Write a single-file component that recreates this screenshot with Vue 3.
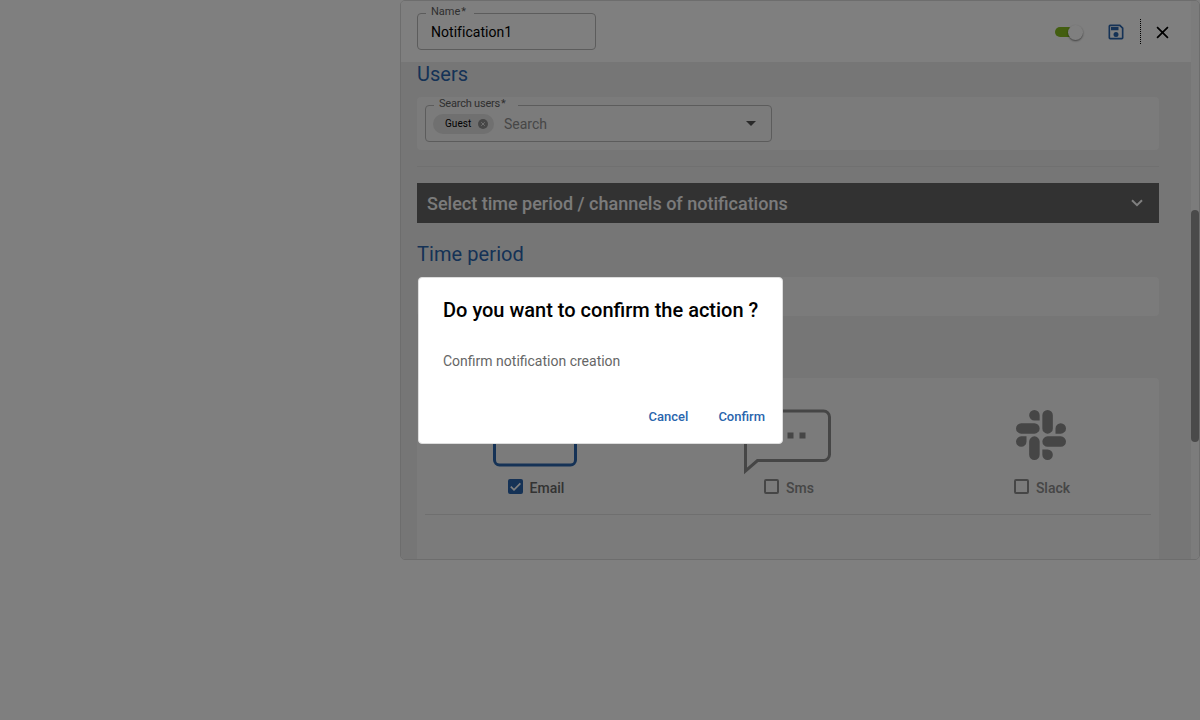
<script setup>
const channels = [
  { id: 'email', label: 'Email', checked: true },
  { id: 'sms', label: 'Sms', checked: false },
  { id: 'slack', label: 'Slack', checked: false },
]
</script>

<template>
  <div class="page">
    <section class="panel">
      <div class="main">
        <header class="header">
          <div class="field name-field">
            <span class="legend name-legend">Name<i>*</i></span>
            <span>Notification1</span>
          </div>
          <div class="tools">
            <div class="switch"><div class="knob"></div></div>
            <svg class="save" viewBox="0 0 24 24"><path d="M17 3H5a2 2 0 0 0-2 2v14a2 2 0 0 0 2 2h14a2 2 0 0 0 2-2V7zM19 19H5V5h11.2L19 7.8z"/><path d="M6 6h9v4H6zM12 12a3 3 0 1 0 0 6 3 3 0 0 0 0-6"/></svg>
            <div class="dots"></div>
            <svg class="close" viewBox="0 0 12 12"><path d="M1 1l10 10M11 1L1 11"/></svg>
          </div>
        </header>

        <div class="body">
          <h2 class="title users-title">Users</h2>
          <div class="card users-card">
            <div class="field search-field">
              <span class="legend search-legend">Search users<i>*</i></span>
              <div class="chip">
                <span>Guest</span>
                <svg viewBox="0 0 10 10"><circle cx="5" cy="5" r="5"/><path d="M3.200 3.200l3.600 3.600M6.800 3.200L3.200 6.800"/></svg>
              </div>
              <span class="placeholder">Search</span>
              <svg class="caret" viewBox="0 0 10 5"><path d="M0 0h10L5 5z"/></svg>
            </div>
          </div>
          <div class="rule"></div>
          <div class="bar">
            <span>Select time period / channels of notifications</span>
            <svg viewBox="0 0 12 8"><path d="M1 1.200l5 5 5-5"/></svg>
          </div>
          <h2 class="title period-title">Time period</h2>
          <div class="card period-card"></div>
          <div class="card channels-card">
            <div class="channels">
              <div v-for="c in channels" :key="c.id" class="channel" :class="c.id">
                <svg v-if="c.id === 'email'" class="icon-email" viewBox="0 0 84 62"><rect x="1.5" y="1.5" width="81" height="58.5" rx="5"/><path d="M4 5l38 28L80 5"/></svg>
                <svg v-else-if="c.id === 'sms'" class="icon-sms" viewBox="0 0 88 66"><path class="outline" d="M1.500 62V8a6 6 0 0 1 6-6H79.500a6 6 0 0 1 6 6v37.500a6 6 0 0 1-6 6H13.500z"/><path class="dot" d="M31.500 23.500h6v6h-6zM43.500 23.500h6v6h-6zM55.500 23.500h6v6h-6z"/></svg>
                <svg v-else class="icon-slack" viewBox="0 0 24 24"><path d="M5.042 15.165a2.528 2.528 0 0 1-2.52 2.523A2.528 2.528 0 0 1 0 15.165a2.527 2.527 0 0 1 2.522-2.52h2.52v2.52zM6.313 15.165a2.527 2.527 0 0 1 2.521-2.52 2.527 2.527 0 0 1 2.521 2.52v6.313A2.528 2.528 0 0 1 8.834 24a2.528 2.528 0 0 1-2.521-2.522v-6.313zM8.834 5.042a2.528 2.528 0 0 1-2.521-2.52A2.528 2.528 0 0 1 8.834 0a2.528 2.528 0 0 1 2.521 2.522v2.52H8.834zM8.834 6.313a2.528 2.528 0 0 1 2.521 2.521 2.528 2.528 0 0 1-2.521 2.521H2.522A2.528 2.528 0 0 1 0 8.834a2.528 2.528 0 0 1 2.522-2.521h6.312zM18.956 8.834a2.528 2.528 0 0 1 2.522-2.521A2.528 2.528 0 0 1 24 8.834a2.528 2.528 0 0 1-2.522 2.521h-2.522V8.834zM17.688 8.834a2.528 2.528 0 0 1-2.523 2.521 2.527 2.527 0 0 1-2.52-2.521V2.522A2.527 2.527 0 0 1 15.165 0a2.528 2.528 0 0 1 2.523 2.522v6.312zM15.165 18.956a2.528 2.528 0 0 1 2.523 2.522A2.528 2.528 0 0 1 15.165 24a2.527 2.527 0 0 1-2.52-2.522v-2.522h2.52zM15.165 17.688a2.527 2.527 0 0 1-2.52-2.523 2.526 2.526 0 0 1 2.52-2.52h6.313A2.527 2.527 0 0 1 24 15.165a2.528 2.528 0 0 1-2.522 2.523h-6.313z"/></svg>
                <div class="option">
                  <span class="box" :class="{ on: c.checked }"><svg v-if="c.checked" viewBox="0 0 16 16"><path d="M3 8.200l3.400 3.400 6.800-7"/></svg></span>
                  <span>{{ c.label }}</span>
                </div>
              </div>
            </div>
          </div>
        </div>
      </div>
      <div class="track"><div class="thumb"></div></div>
    </section>

    <div class="overlay">
      <div class="dialog">
        <h1>Do you want to confirm the action ?</h1>
        <p>Confirm notification creation</p>
        <div class="actions"><span>Cancel</span><span>Confirm</span></div>
      </div>
    </div>
  </div>
</template>

<style>
body { margin: 0; background: #fff; }
</style>

<style scoped>
* { box-sizing: border-box; }
.page { position: relative; width: 1200px; height: 720px; overflow: hidden; background: #fff; font-family: Roboto, sans-serif; font-size: 14px; color: #000; }
svg { display: block; flex: none; }
.panel { display: flex; width: 800px; height: 560px; margin-left: 400px; border: 1px solid #dadada; border-radius: 5px; overflow: hidden; }
.main { width: 790px; display: flex; flex-direction: column; background: #ededed; }
.header { height: 61px; flex: none; padding: 0 20px 0 16px; display: flex; align-items: center; justify-content: space-between; background: #fff; }
.field { position: relative; height: 37px; border: 1px solid #b8b8b8; border-radius: 4px; display: flex; align-items: center; }
.name-field { width: 179px; padding-left: 13px; letter-spacing: .04px; font-variant-ligatures: common-ligatures; }
.legend { position: absolute; top: -9px; height: 14px; line-height: 14px; font-size: 11px; color: #606060; }
.legend i { font-style: normal; margin-left: 1px; }
.name-legend { left: 8px; width: 48px; padding-left: 5px; letter-spacing: 0; background: #fff; }
.search-legend { left: 8px; width: 84px; padding-left: 5px; letter-spacing: -.2px; background: #f6f6f6; }
.tools { display: flex; align-items: center; padding-top: 1px; }
.switch { width: 28px; height: 10px; border-radius: 5px; display: flex; align-items: center; justify-content: flex-end; background: linear-gradient(90deg, #86bd20 20px, transparent 20px); }
.knob { width: 15px; height: 15px; flex: none; border-radius: 50%; background: #fff; box-shadow: 0 1px 2px rgba(0,0,0,.5); }
.save { width: 20px; height: 20px; margin-left: 23px; fill: #2a65ad; }
.dots { height: 25px; margin: 0 0 2px 14px; border-left: 1px dotted #000; }
.close { width: 13px; height: 13px; margin-left: 15px; margin-right: 2px; fill: none; stroke: #000; stroke-width: 1.6; }
.body { flex: 1; min-height: 0; overflow: hidden; padding: 0 32px 0 16px; }
.title { margin: 0; font-size: 20px; line-height: 24px; font-weight: 400; color: #2a65ad; }
.users-title { height: 35px; }
.card { background: #f6f6f6; border-radius: 4px; }
.users-card { height: 53px; padding: 8px; }
.search-field { width: 347px; padding: 0 15px 0 7px; }
.chip { width: 61px; height: 20px; border-radius: 10px; padding: 0 6px 0 12px; display: flex; align-items: center; justify-content: space-between; background: #e0e0e0; font-size: 10px; letter-spacing: .05px; }
.chip svg { width: 10px; height: 10px; fill: #8e8e8e; stroke: #e0e0e0; stroke-width: 1; }
.chip circle { stroke: none; }
.placeholder { margin-left: 10px; color: #8e8e8e; }
.caret { width: 10px; height: 5px; margin-left: auto; fill: #555; }
.rule { height: 1px; margin-top: 16px; background: #e0e0e0; }
.bar { margin-top: 16px; height: 40px; padding: 0 16px 0 10px; display: flex; align-items: center; justify-content: space-between; background: #646464; color: #f6f6f6; font-size: 18px; font-weight: 500; }
.bar svg { width: 12px; height: 8px; fill: none; stroke: #fff; stroke-width: 2; }
.period-title { margin-top: 19px; height: 35px; letter-spacing: .08px; }
.period-card { height: 39px; }
.channels-card { margin-top: 62px; height: 200px; padding: 0 8px; }
.channels { height: 137px; display: grid; grid-template-columns: repeat(3, 253px); justify-content: center; border-bottom: 1px solid #dedede; }
.channel { display: flex; flex-direction: column; align-items: center; height: 120px; justify-content: flex-end; color: #8c8c8c; }
.email { color: #666; }
.icon-email { width: 84px; height: 62px; margin-bottom: 11px; fill: none; stroke: #2a65ad; stroke-width: 3; }
.icon-sms { width: 88px; height: 66px; margin-bottom: 3px; overflow: visible; }
.outline { fill: none; stroke: #8c8c8c; stroke-width: 3; }
.dot { fill: #8c8c8c; }
.icon-slack { width: 50px; height: 50px; margin-bottom: 18px; fill: #8c8c8c; }
.option { display: flex; align-items: center; height: 20px; gap: 7px; padding-left: 2px; font-weight: 500; }
.box { width: 15px; height: 15px; margin-bottom: 3px; border: 2px solid #8c8c8c; border-radius: 2px; }
.box.on { border: 0; background: #2a65ad; }
.box svg { width: 15px; height: 15px; fill: none; stroke: #fff; stroke-width: 1.8; }
.track { width: 8px; background: #f8f8f8; }
.thumb { margin-top: 209px; height: 232px; border-radius: 4px; background: #959595; }
.overlay { position: absolute; inset: 0; background: rgba(0,0,0,.5); display: flex; align-items: center; justify-content: center; }
.dialog { width: 365px; height: 167px; margin: 1px 0 0 1px; border: 1px solid #ddd; border-radius: 4px; background: #fff; padding: 20px 16px 0 24px; }
h1 { margin: 0; font-size: 20px; line-height: 24px; font-weight: 500; white-space: nowrap; }
p { margin: 29px 0 0; line-height: 20px; color: #666; }
.actions { display: flex; justify-content: flex-end; gap: 30px; margin-top: 36px; padding-right: 1px; line-height: 20px; font-size: 13px; font-weight: 500; color: #2a65ad; }
</style>
